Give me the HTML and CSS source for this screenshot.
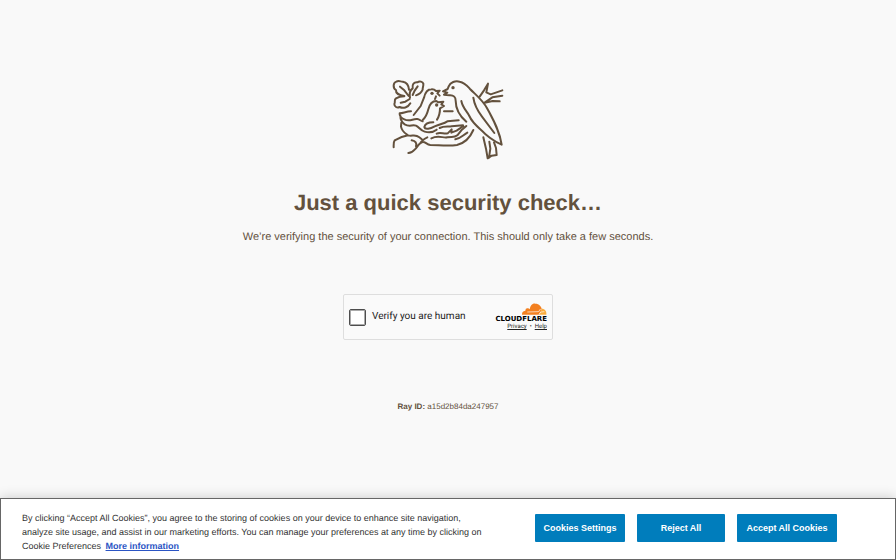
FILE: index.html
```html
<!DOCTYPE html>
<html lang="en">
<head>
<meta charset="utf-8">
<meta name="viewport" content="width=device-width, initial-scale=1">
<title>Just a quick security check…</title>
<link rel="stylesheet" href="styles.css">
</head>
<body>
<main class="check">
  <svg class="nest" viewBox="0 0 360 264" role="img" aria-label="Birds in a nest">
    <!-- leaves -->
    <path d="M49 60C35 58 23 52 24 42C14 36 15 20 25 17C33 12 39 18 45 17C56 19 62 28 63 41M66 65C63 51 67 42 74 37C72 25 78 18 88 19C95 14 104 17 106 23C107 31 103 36 104 41C100 50 94 55 84 58M49 61C38 61 29 64 24 67C17 72 23 78 19 84C19 92 27 97 35 93C45 98 60 95 67 82M36 32L49 43L62 60M89 31L80 44L74 57M38 80L52 77L65 69"/>
    <!-- chicks -->
    <path d="M77 117L98 90L108 65C112 48 119 40 130 40C137 39 141 42 144 45L155 44L148 52L155 59M144 61L141 69"/>
    <path d="M104 132C114 124 118 112 121 100C125 83 133 75 145 75L151 79L166 77L160 85L168 90L156 97C156 111 153 122 147 131"/>
    <!-- mother bird -->
    <path d="M182 31C187 18 202 14 215 17C231 20 239 31 246 39C266 59 284 72 298 98C315 130 334 162 341 206C315 195 293 177 275 158C263 147 254 138 248 128M182 31L179 39L165 46L178 50L168 56L184 58C198 57 203 64 203 74C203 97 214 119 235 137M220 75C224 96 237 106 244 120C255 145 276 157 293 175M256 65C259 86 269 105 282 122L319 171"/>
    <!-- tail and branch -->
    <path d="M286 184L294 218L299 247L311 239L326 237L324 216L318 199M304 197L307 218L303 245M275 62L288 43L300 23L295 49L308 55L343 43M343 59L313 64L290 80L314 75L335 76"/>
    <!-- nest -->
    <path d="M69 106C56 106 46 111 35 112C34 121 39 126 49 130C66 139 74 127 88 129C95 130 98 135 104 136M37 119C37 133 42 139 50 145C65 154 72 145 84 149C94 154 97 163 110 167C123 171 137 168 146 161M40 140L39 152C42 167 50 171 60 178C73 182 81 173 94 184L104 192M136 139C121 139 111 145 109 153C111 162 127 158 140 151C158 143 168 143 178 136L212 133M155 156C168 149 181 153 191 151L225 148M146 173C157 168 169 175 179 172L191 160L190 170L206 164L226 150M130 187C151 176 165 187 178 184C191 181 198 186 208 178L220 163L235 150M202 190C217 188 224 178 238 170M256 162C247 183 231 201 207 207C180 211 151 207 127 207C116 206 111 196 104 198C94 200 88 213 80 221C74 228 69 231 61 231M71 193C83 195 87 201 84 211M118 184C108 188 104 193 98 199M60 178C42 181 31 187 20 193C16 198 17 204 17 214M168 106H194"/>
    <circle class="eye" cx="132" cy="52" r="5"/>
    <circle class="eye" cx="146" cy="87" r="5"/>
    <circle class="eye" cx="195" cy="35" r="5"/>
  </svg>
  <h1 class="title">Just a quick security check…</h1>
  <p class="lead">We’re verifying the security of your connection. This should only take a few seconds.</p>
  <section class="widget" aria-label="Human verification">
    <label class="verify"><input class="tick" type="checkbox"><span>Verify you are human</span></label>
    <div class="provider">
      <svg class="cloud" viewBox="0 0 78 36" aria-hidden="true">
        <path fill="#f38020" d="M3 35Q2 24 13 23Q13 14 22 16L26 19C29 5 36 1 43 2C55 2 60 10 62 17L56 35Z"/>
        <path fill="#faad3f" d="M56 35L62 17C72 17 77 24 76 35Z"/>
        <path fill="none" stroke="#fff" stroke-width="2" d="M19 27L51 26Q57 25 58 18M54 35Q55 28 61 27L70 26"/>
      </svg>
      <span class="brand">CLOUDFLARE</span>
      <span class="links"><a href="#privacy">Privacy</a><span>•</span><a href="#help">Help</a></span>
    </div>
  </section>
  <p class="ray"><strong>Ray ID:</strong> a15d2b84da247957</p>
</main>
<section class="cookies" aria-label="Cookie consent">
  <p class="notice">By clicking “Accept All Cookies”, you agree to the storing of cookies on your device to enhance site navigation, analyze site usage, and assist in our marketing efforts. You can manage your preferences at any time by clicking on Cookie Preferences <a class="more" href="#more">More information</a></p>
  <div class="actions">
    <button class="btn" type="button">Cookies Settings</button>
    <button class="btn btn-reject" type="button">Reject All</button>
    <button class="btn btn-accept" type="button">Accept All Cookies</button>
  </div>
</section>
</body>
</html>
```
FILE: styles.css
```css
* {
  box-sizing: border-box;
}

body {
  margin: 0;
  min-height: 100vh;
  display: flex;
  flex-direction: column;
  justify-content: space-between;
  background: #f9f9f9;
  color: #63513d;
  font-family: "Liberation Sans", Arial, sans-serif;
  text-rendering: geometricPrecision;
}

.check {
  display: flex;
  flex-direction: column;
  align-items: center;
  padding: 76px 16px 24px;
  text-align: center;
}

.nest {
  width: 120px;
  height: 88px;
  fill: none;
  stroke: #63513d;
  stroke-width: 6;
  stroke-linecap: round;
  stroke-linejoin: round;
}

.eye {
  fill: #63513d;
  stroke: none;
}

.title {
  margin: 24px 0 0;
  font-size: 22px;
  line-height: 30px;
}

.lead {
  margin: 12px 0 0;
  font-size: 11px;
  line-height: 14px;
}

.widget {
  width: 210px;
  max-width: 100%;
  margin-top: 50px;
  padding: 8px 5px;
  display: flex;
  align-items: center;
  justify-content: space-between;
  border: 1px solid #dedede;
  border-radius: 2px;
  background: #fafafa;
  color: #232323;
  font-family: Roboto, "Liberation Sans", sans-serif;
}

.verify {
  display: flex;
  align-items: center;
  gap: 6px;
  font-size: 10px;
  line-height: 14px;
}

.tick {
  appearance: none;
  width: 17px;
  height: 17px;
  margin: 0;
  border: 1px solid #4d4d4d;
  box-shadow: inset 0 0 0 1px #aaa;
  border-radius: 2px;
  background: #fff;
}

.provider {
  display: flex;
  flex-direction: column;
  align-items: flex-end;
}

.cloud {
  width: 26px;
  height: 12px;
}

.brand {
  color: #000;
  font-family: "DejaVu Sans", sans-serif;
  font-size: 7px;
  font-weight: bold;
  line-height: 8px;
}

.links {
  display: flex;
  gap: 3px;
  font-size: 6px;
  line-height: 8px;
}

.links a {
  color: inherit;
}

.ray {
  margin: 61px 0 0;
  font-size: 8px;
  line-height: 12px;
}

.cookies {
  display: flex;
  align-items: flex-start;
  justify-content: space-between;
  gap: 32px;
  padding: 12px 58px 6px 21px;
  border: 1px solid #666;
  background: #fff;
  box-shadow: 0 0 12px rgba(0, 0, 0, 0.2);
}

.notice {
  flex: 1;
  max-width: 472px;
  margin: 0;
  color: #333;
  font-size: 9px;
  line-height: 14px;
}

.more {
  margin-left: 2px;
  color: #2b54c4;
  font-weight: bold;
}

.actions {
  display: flex;
  align-items: center;
  gap: 12px;
  padding-top: 3px;
}

.btn {
  min-width: 90px;
  height: 28px;
  padding: 0 7px;
  border: 0;
  border-radius: 1px;
  background: #007dbc;
  color: #fff;
  font: bold 9px/14px "Liberation Sans", Arial, sans-serif;
  white-space: nowrap;
}

.btn-reject {
  min-width: 88px;
}

.btn-accept {
  min-width: 100px;
}
```
